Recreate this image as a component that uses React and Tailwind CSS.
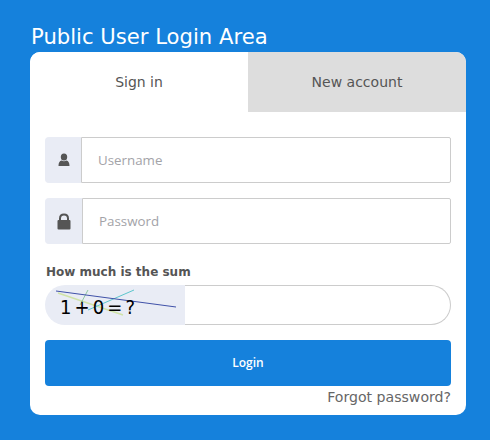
import React from "react";

const dv = "font-['DejaVu_Sans',sans-serif]";
const os = "font-['Open_Sans',sans-serif]";

function UserIcon() {
  return (
    <svg width="12" height="14" viewBox="0 0 12 14" className="block">
      <ellipse cx="6" cy="4" rx="3.2" ry="3.6" fill="#555" />
      <path d="M0.5 13 C0.5 9.5 1.5 8 3.6 7.5 C5 8.6 7 8.6 8.4 7.5 C10.5 8 11.5 9.5 11.5 13 Z" fill="#555" />
    </svg>
  );
}

function LockIcon() {
  return (
    <svg width="14" height="17" viewBox="0 0 14 17" className="block">
      <path d="M3 8 V5.5 C3 3 4.6 1.5 7 1.5 C9.4 1.5 11 3 11 5.5 V8" fill="none" stroke="#555" strokeWidth="2" />
      <rect x="0.5" y="7" width="13" height="9.5" rx="1" fill="#555" />
    </svg>
  );
}

function Field({ icon, placeholder, type, boxW }) {
  return (
    <div className="flex h-[46px]">
      <div className={`${boxW} shrink-0 flex items-center justify-center bg-[#e9ecf5] border border-r-0 border-[#e9ecf5] rounded-l-[4px]`}>
        {icon}
      </div>
      <input
        type={type}
        placeholder={placeholder}
        className={`flex-1 min-w-0 h-full pl-4 pr-3 bg-white border border-[#cccccc] rounded-r-[2px] text-[13.33px] text-[#555] outline-none placeholder:text-[#a3a3a8] ${os}`}
      />
    </div>
  );
}

export default function App() {
  return (
    <div className={`w-[490px] h-[440px] bg-[#1581dc] overflow-hidden pt-[22px] pl-[30px] ${dv}`}>
      <h1 className="text-white text-[21.15px] leading-[29px] font-normal m-0 pl-px">Public User Login Area</h1>
      <div className="mt-px w-[436px] h-[363px] bg-white rounded-[10px] overflow-hidden">
        <div className="flex h-[60px] text-[14px] text-[#555]">
          <div className="w-[218px] flex items-center justify-center bg-white">Sign in</div>
          <div className="w-[218px] flex items-center justify-center bg-[#dddddd]">New account</div>
        </div>
        <div className="px-[15px] pt-[25px]">
          <div className="flex flex-col gap-[15px]">
            <Field icon={<UserIcon />} placeholder="Username" type="text" boxW="w-[36px]" />
            <Field icon={<LockIcon />} placeholder="Password" type="password" boxW="w-[37px]" />
          </div>
          <div className="mt-[21px] h-[15px] pl-px text-[12px] leading-[15px] font-bold text-[#555]">How much is the sum</div>
          <div className="mt-[5px] flex h-[40px]">
            <div className="relative w-[140px] shrink-0 bg-[#e9ecf5] rounded-l-[20px] overflow-hidden">
              <svg width="140" height="40" viewBox="0 0 140 40" className="absolute inset-0">
                <line x1="13" y1="8" x2="78" y2="30" stroke="#cfe3a8" strokeWidth="1.5" />
                <line x1="43" y1="5" x2="35" y2="20" stroke="#8fc9a0" strokeWidth="1" />
                <line x1="43" y1="25" x2="89" y2="5" stroke="#5cc6cc" strokeWidth="1" />
                <line x1="11" y1="6" x2="131" y2="22" stroke="#3f51a8" strokeWidth="1" />
              </svg>
              <span className="absolute left-[15px] top-[10px] text-[20px] leading-[24px] text-black whitespace-pre font-['DejaVu_Sans_Condensed',sans-serif] [font-stretch:condensed] tracking-[-1.3px]">1 + 0 = ?</span>
            </div>
            <input type="text" className="flex-1 min-w-0 h-full bg-white border border-l-0 border-[#cccccc] rounded-r-[20px] outline-none" />
          </div>
          <button className={`mt-[15px] w-full h-[46px] bg-[#1581dc] text-white text-[12px] font-semibold rounded-[4px] ${os}`}>Login</button>
          <div className="mt-px text-right text-[14.1px] leading-[20px] text-[#666]">Forgot password?</div>
        </div>
      </div>
    </div>
  );
}
